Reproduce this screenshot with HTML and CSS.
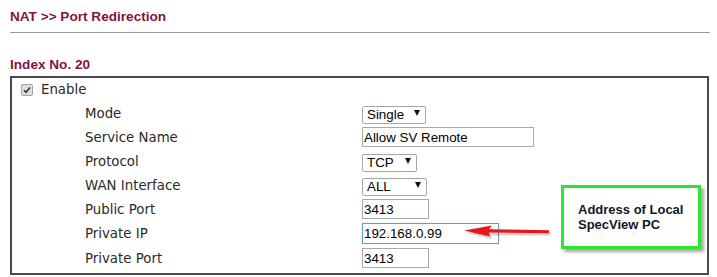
FILE: index.html
```html
<!DOCTYPE html>
<html lang="en">
<head>
    <meta charset="UTF-8">
    <meta name="viewport" content="width=device-width, initial-scale=1.0">
    <title>NAT Port Redirection</title>
    <link rel="stylesheet" href="styles.css">
</head>
<body>
    <div class="page">
        <h1 class="title">NAT &gt;&gt; Port Redirection</h1>
        <h2 class="index">Index No. 20</h2>
        <section class="panel">
            <div class="enable-row">
                <span class="check">
                    <svg width="8" height="8" viewBox="0 0 8 8"><path d="M1 4.2 L3.1 6.3 L7 1.6" fill="none" stroke="#333" stroke-width="1.6"/></svg>
                </span>
                <span>Enable</span>
            </div>
            <div class="field">
                <label class="label">Mode</label>
                <span class="select-wrap"><select class="sel-mode"><option>Single</option></select></span>
            </div>
            <div class="field">
                <label class="label">Service Name</label>
                <input class="text-in in-service" type="text" value="Allow SV Remote">
            </div>
            <div class="field">
                <label class="label">Protocol</label>
                <span class="select-wrap"><select class="sel-proto"><option>TCP</option></select></span>
            </div>
            <div class="field">
                <label class="label">WAN Interface</label>
                <span class="select-wrap"><select class="sel-wan"><option>ALL</option></select></span>
            </div>
            <div class="field">
                <label class="label">Public Port</label>
                <input class="text-in in-port" type="text" value="3413">
            </div>
            <div class="field">
                <label class="label">Private IP</label>
                <input class="text-in in-ip" type="text" value="192.168.0.99">
            </div>
            <div class="field field-last">
                <label class="label">Private Port</label>
                <input class="text-in in-port" type="text" value="3413">
            </div>

            <div class="note">Address of Local<br>SpecView PC</div>
            <svg class="arrow" width="95" height="22" viewBox="0 0 95 22">
                <polygon points="6,12 34,7 31,11 91,11.5 91,14.5 31,14.5 32,18" fill="#000" opacity="0.18"/>
                <polygon points="4,9.5 32,4.5 29,8.3 89,9.2 89,12.2 29,11.6 30,15.5" fill="#e8161c"/>
            </svg>
        </section>
    </div>
</body>
</html>
```

FILE: styles.css
```css
body {
    margin: 0;
    padding: 0;
    background: #fff;
    font-family: "DejaVu Sans", Verdana, sans-serif;
    color: #2a2a2a;
}
.page {
    padding: 9px 0 0 10px;
}
.title, .index {
    margin: 0;
    font: bold 13.6px/16px "Liberation Sans", Arial, sans-serif;
    color: #841240;
}
.title {
    width: 700px;
    padding-bottom: 7px;
    border-bottom: 1px solid #9a9a9a;
}
.index {
    margin: 24px 0 3px;
}
.panel {
    position: relative;
    width: 695px;
    padding-bottom: 2px;
    border: 2px solid #4a4a4a;
}
.enable-row {
    display: flex;
    align-items: center;
    gap: 8px;
    height: 23px;
    padding-left: 9px;
    font-size: 13.33px;
}
.check {
    display: flex;
    align-items: center;
    justify-content: center;
    width: 12px;
    height: 12px;
    box-sizing: border-box;
    border: 1px solid #a4a4a4;
    border-radius: 2px;
    background: #dedede;
}
.field {
    display: flex;
    align-items: center;
    height: 24px;
    padding-left: 73px;
}
.field-last {
    height: 26px;
}
.label {
    width: 277px;
    font-size: 13.33px;
}
.select-wrap {
    position: relative;
    display: inline-block;
    height: 18px;
}
.select-wrap::after {
    content: "";
    position: absolute;
    right: 6px;
    top: 6px;
    border-left: 3.5px solid transparent;
    border-right: 3.5px solid transparent;
    border-top: 6px solid #111;
}
select {
    appearance: none;
    -webkit-appearance: none;
    height: 18px;
    margin: 0;
    padding: 0 0 0 4px;
    border: 1px solid #a6a6a6;
    border-radius: 2px;
    background: #fff;
    color: #000;
    font: 13.33px "Liberation Sans", Arial, sans-serif;
}
.sel-mode { width: 64px; }
.sel-proto { width: 55px; }
.sel-wan { width: 65px; }
.text-in {
    box-sizing: border-box;
    height: 20px;
    margin: 0;
    padding: 0 1px;
    border: 1px solid #a9a9a9;
    color: #000;
    font: 13.33px "Liberation Sans", Arial, sans-serif;
    outline: none;
}
.in-service { width: 172px; }
.in-port { width: 67px; }
.in-ip {
    width: 137px;
    height: 21px;
    border-color: #6f9ad8;
    box-shadow: 0 0 1px #9bbbe8;
}
.note {
    position: absolute;
    left: 549px;
    top: 107px;
    width: 140px;
    height: 64px;
    box-sizing: border-box;
    display: flex;
    align-items: center;
    padding-left: 14px;
    border: 3px solid #2fe62f;
    background: #fff;
    box-shadow: 3px 3px 3px rgba(0, 0, 0, 0.35);
    font: bold 13px/15.5px "Liberation Sans", Arial, sans-serif;
    color: #111827;
}
.arrow {
    position: absolute;
    left: 448px;
    top: 143px;
}
```
